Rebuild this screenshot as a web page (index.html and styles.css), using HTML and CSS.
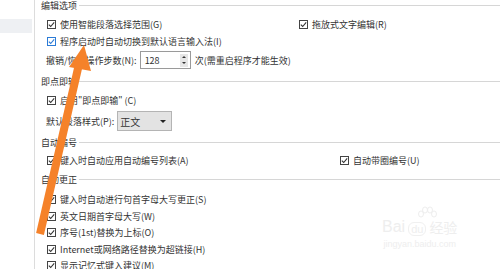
FILE: index.html
```html
<!DOCTYPE html>
<html lang="zh-CN">
<head>
    <meta charset="UTF-8">
    <meta name="viewport" content="width=device-width, initial-scale=1.0">
    <title>选项 - 编辑</title>
    <link rel="stylesheet" href="styles.css">
</head>
<body>
    <div class="window">
        <aside class="sidebar">
            <div class="nav-item"></div>
        </aside>

        <main class="content">
            <section class="group group-edit">
                <div class="group-title"><span>编辑选项</span></div>
                <div class="row">
                    <label class="check wide-a">
                        <svg class="box" viewBox="0 0 9 9"><rect x="0.5" y="0.5" width="8" height="8"/><polyline points="1.8,4.6 3.7,6.5 7.2,2.4"/></svg>
                        使用智能段落选择范围(G)
                    </label>
                    <label class="check">
                        <svg class="box" viewBox="0 0 9 9"><rect x="0.5" y="0.5" width="8" height="8"/><polyline points="1.8,4.6 3.7,6.5 7.2,2.4"/></svg>
                        拖放式文字编辑(R)
                    </label>
                </div>
                <div class="row">
                    <label class="check hover">
                        <svg class="box" viewBox="0 0 9 9"><rect x="0.5" y="0.5" width="8" height="8"/><polyline points="1.8,4.6 3.7,6.5 7.2,2.4"/></svg>
                        程序启动时自动切换到默认语言输入法(I)
                    </label>
                </div>
                <div class="row row-field">
                    <span class="label">撤销/恢复操作步数(N):</span>
                    <div class="spinbox">
                        <span class="spin-value">128</span>
                        <span class="spin-buttons"><i class="up"></i><i class="down"></i></span>
                    </div>
                    <span class="hint">次(需重启程序才能生效)</span>
                </div>
            </section>

            <section class="group group-click">
                <div class="group-title"><span>即点即输</span></div>
                <div class="row">
                    <label class="check">
                        <svg class="box" viewBox="0 0 9 9"><rect x="0.5" y="0.5" width="8" height="8"/><polyline points="1.8,4.6 3.7,6.5 7.2,2.4"/></svg>
                        启用"即点即输" (C)
                    </label>
                </div>
                <div class="row row-select">
                    <span class="label">默认段落样式(P):</span>
                    <div class="select">
                        <span>正文</span>
                        <i class="caret"></i>
                    </div>
                </div>
            </section>

            <section class="group group-number">
                <div class="group-title"><span>自动编号</span></div>
                <div class="row">
                    <label class="check wide-b">
                        <svg class="box" viewBox="0 0 9 9"><rect x="0.5" y="0.5" width="8" height="8"/><polyline points="1.8,4.6 3.7,6.5 7.2,2.4"/></svg>
                        键入时自动应用自动编号列表(A)
                    </label>
                    <label class="check">
                        <svg class="box" viewBox="0 0 9 9"><rect x="0.5" y="0.5" width="8" height="8"/><polyline points="1.8,4.6 3.7,6.5 7.2,2.4"/></svg>
                        自动带圈编号(U)
                    </label>
                </div>
            </section>

            <section class="group group-correct">
                <div class="group-title"><span>自动更正</span></div>
                <div class="row">
                    <label class="check">
                        <svg class="box" viewBox="0 0 9 9"><rect x="0.5" y="0.5" width="8" height="8"/><polyline points="1.8,4.6 3.7,6.5 7.2,2.4"/></svg>
                        键入时自动进行句首字母大写更正(S)
                    </label>
                </div>
                <div class="row">
                    <label class="check">
                        <svg class="box" viewBox="0 0 9 9"><rect x="0.5" y="0.5" width="8" height="8"/><polyline points="1.8,4.6 3.7,6.5 7.2,2.4"/></svg>
                        英文日期首字母大写(W)
                    </label>
                </div>
                <div class="row">
                    <label class="check">
                        <svg class="box" viewBox="0 0 9 9"><rect x="0.5" y="0.5" width="8" height="8"/><polyline points="1.8,4.6 3.7,6.5 7.2,2.4"/></svg>
                        序号(1st)替换为上标(O)
                    </label>
                </div>
                <div class="row">
                    <label class="check">
                        <svg class="box" viewBox="0 0 9 9"><rect x="0.5" y="0.5" width="8" height="8"/><polyline points="1.8,4.6 3.7,6.5 7.2,2.4"/></svg>
                        Internet或网络路径替换为超链接(H)
                    </label>
                </div>
                <div class="row">
                    <label class="check">
                        <svg class="box" viewBox="0 0 9 9"><rect x="0.5" y="0.5" width="8" height="8"/><polyline points="1.8,4.6 3.7,6.5 7.2,2.4"/></svg>
                        显示记忆式键入建议(M)
                    </label>
                </div>
            </section>
        </main>

        <!-- watermark of the screenshot source -->
        <div class="watermark">
            <svg class="wm-paw" width="22" height="16" viewBox="0 0 22 16">
                <ellipse cx="5" cy="8" rx="2.5" ry="3"/>
                <ellipse cx="9" cy="4" rx="2.5" ry="3"/>
                <ellipse cx="14" cy="4" rx="2.5" ry="3"/>
                <ellipse cx="18" cy="8" rx="2.5" ry="3"/>
            </svg>
            <div class="wm-logo"><span class="wm-bai">Bai</span><span class="wm-du">du</span><span class="wm-jy">经验</span></div>
            <div class="wm-url">jingyan.baidu.com</div>
        </div>

        <!-- orange pointer drawn over the dialog -->
        <svg class="arrow" width="500" height="269" viewBox="0 0 500 269">
            <line x1="40" y1="234" x2="79" y2="64" />
            <polygon points="84,45 69,67 91,71" />
        </svg>
    </div>
</body>
</html>
```

FILE: styles.css
```css
body {
    margin: 0;
    background: #fff;
    font-family: "Noto Sans CJK SC", "Noto Sans", sans-serif;
    font-size: 9px;
    color: #333;
}
.window {
    position: relative;
    display: flex;
    width: 500px;
    height: 269px;
    overflow: hidden;
}
.sidebar {
    width: 32px;
    padding-right: 2px;
    border-right: 1px solid #dcdcdc;
    flex-shrink: 0;
}
.nav-item {
    margin-top: 19px;
    height: 14px;
    background: #eef0f3;
}
.content {
    flex: 1;
    padding-left: 6px;
}
.group {
    margin-top: 5px;
}
.group-edit {
    margin-top: -1px;
}
.group-title {
    display: flex;
    align-items: center;
    height: 12px;
    margin-bottom: 5px;
}
.group-title::after {
    content: "";
    flex: 1;
    height: 1px;
    margin-left: 2px;
    background: #d6d6d6;
}
.group-number .group-title {
    margin-bottom: 4px;
}
.group-correct .group-title {
    margin-bottom: 6px;
}
.row {
    display: flex;
    align-items: center;
    height: 17px;
    padding-left: 6px;
}
.row-field {
    height: 20px;
    padding-left: 5px;
}
.row-select {
    height: 20px;
    margin-top: 2px;
    padding-left: 5px;
}
.group-number .row,
.group-correct .row {
    height: 16.5px;
}
.check {
    display: flex;
    align-items: center;
    white-space: nowrap;
}
.box {
    width: 9px;
    height: 9px;
    margin-right: 4px;
    flex-shrink: 0;
}
.box rect {
    fill: #fff;
    stroke: #444;
    stroke-width: 1;
}
.box polyline {
    fill: none;
    stroke: #333;
    stroke-width: 1.1;
}
.hover .box rect {
    stroke: #2b7bd6;
}
.hover .box polyline {
    stroke: #2b7bd6;
}
.wide-a {
    width: 252px;
}
.wide-b {
    width: 293px;
}
.label {
    white-space: nowrap;
}
.spinbox {
    display: flex;
    align-items: center;
    justify-content: space-between;
    width: 49px;
    height: 16px;
    margin-left: 3px;
    border: 1px solid #9a9a9a;
}
.spin-value {
    padding-left: 4px;
}
.spin-buttons {
    display: flex;
    flex-direction: column;
    align-items: center;
    justify-content: space-around;
    width: 8px;
    height: 13px;
    margin-right: 2px;
    background: #e6e6e6;
}
.spin-buttons i {
    width: 0;
    height: 0;
    border-left: 2px solid transparent;
    border-right: 2px solid transparent;
}
.spin-buttons .up {
    border-bottom: 2px solid #333;
}
.spin-buttons .down {
    border-top: 2px solid #333;
}
.hint {
    margin-left: 4px;
    white-space: nowrap;
}
.select {
    display: flex;
    align-items: center;
    justify-content: space-between;
    width: 51px;
    height: 18px;
    margin-left: 3px;
    padding-left: 2px;
    background: #e3e3e3;
    border: 1px solid #b4b4b4;
    font-size: 10px;
}
.caret {
    width: 0;
    height: 0;
    margin-right: 5px;
    border-left: 3px solid transparent;
    border-right: 3px solid transparent;
    border-top: 3px solid #222;
}
.watermark {
    position: absolute;
    left: 382px;
    top: 206px;
    color: #eeeeee;
    font-family: "Liberation Sans", sans-serif;
    text-align: center;
}
.wm-paw {
    display: block;
    margin: 0 0 -4px 34px;
}
.wm-paw ellipse {
    fill: none;
    stroke: #eeeeee;
    stroke-width: 1;
}
.wm-logo {
    display: flex;
    align-items: flex-end;
    font-size: 16px;
    line-height: 18px;
}
.wm-du {
    font-size: 11px;
    margin: 0 3px;
    padding: 0 2px;
    border: 1px solid #f0f0f0;
    border-radius: 6px;
    line-height: 12px;
}
.wm-jy {
    font-family: "Noto Sans CJK SC", sans-serif;
    font-size: 14px;
}
.wm-url {
    font-size: 9px;
    margin-top: 3px;
}
.arrow {
    position: absolute;
    left: 0;
    top: 0;
    pointer-events: none;
}
.arrow line {
    stroke: #f5822a;
    stroke-width: 8;
}
.arrow polygon {
    fill: #f5822a;
}
```
